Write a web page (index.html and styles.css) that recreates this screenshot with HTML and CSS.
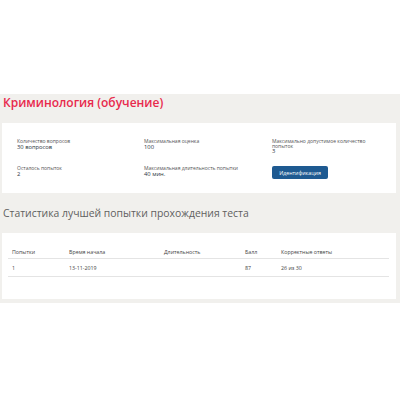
FILE: index.html
```html
<!DOCTYPE html>
<html lang="ru">
<head>
<meta charset="utf-8">
<link rel="stylesheet" href="styles.css">
</head>
<body>
<div class="top"></div>
<main class="page">
  <h1 class="title">Криминология (обучение)</h1>
  <section class="card info">
    <div class="item"><div class="label">Количество вопросов</div><div class="value">30 вопросов</div></div>
    <div class="item"><div class="label">Максимальная оценка</div><div class="value">100</div></div>
    <div class="item"><div class="label">Максимально допустимое количество<br>попыток</div><div class="value">3</div></div>
    <div class="item"><div class="label">Осталось попыток</div><div class="value">2</div></div>
    <div class="item"><div class="label">Максимальная длительность попытки</div><div class="value">40 мин.</div></div>
    <div class="item"><button class="btn">Идентификация</button></div>
  </section>
  <h2 class="subtitle">Статистика лучшей попытки прохождения теста</h2>
  <section class="card stats">
    <table class="table">
      <thead>
        <tr><th class="c1">Попытки</th><th class="c2">Время начала</th><th class="c3">Длительность</th><th class="c4">Балл</th><th class="c5">Корректные ответы</th></tr>
      </thead>
      <tbody>
        <tr><td>1</td><td>13-11-2019</td><td></td><td>87</td><td>26 из 30</td></tr>
      </tbody>
    </table>
  </section>
</main>
</body>
</html>
```
FILE: styles.css
```css
html, body {
  margin: 0;
  padding: 0;
  background: #ffffff;
  font-family: "Open Sans", "Liberation Sans", sans-serif;
}
.top {
  height: 94px;
}
.page {
  background: #f1f0ed;
  padding: 0 4px 4px 2px;
  height: 209px;
  box-sizing: border-box;
}
.title {
  margin: 0;
  padding: 1px 0 0 1px;
  height: 29px;
  box-sizing: border-box;
  font-size: 12px;
  line-height: 16px;
  font-weight: 600;
  color: #e8294c;
}
.card {
  background: #ffffff;
}
.info {
  height: 70px;
  box-sizing: border-box;
  padding: 16px 0 0 15px;
  display: grid;
  grid-template-columns: 127px 128px 120px;
  grid-template-rows: 27px 24px;
}
.label {
  font-size: 5px;
  line-height: 4.5px;
  color: #555;
}
.value {
  font-size: 5.8px;
  line-height: 6px;
  color: #2a3340;
}
.btn {
  display: block;
  margin: 0;
  width: 56px;
  height: 13px;
  padding: 0;
  border: none;
  border-radius: 2px;
  background: #1e5a91;
  color: #fff;
  font-family: inherit;
  font-size: 5.3px;
}
.subtitle {
  margin: 0;
  padding: 12px 0 0 1px;
  height: 40px;
  box-sizing: border-box;
  font-size: 10.4px;
  line-height: 16px;
  font-weight: 400;
  color: #5f5f5f;
}
.stats {
  height: 66px;
  box-sizing: border-box;
  padding: 12px 7px 0 6px;
}
.table {
  width: 100%;
  table-layout: fixed;
  border-collapse: collapse;
  font-size: 5.3px;
  color: #444;
}
.table th {
  font-weight: 400;
  text-align: left;
  height: 13px;
  padding: 0 0 0 4px;
  border-bottom: 1px solid #e4e4e4;
}
.table td {
  height: 17px;
  padding: 0 0 0 4px;
  border-bottom: 1px solid #e4e4e4;
}
.c1 { width: 53px; }
.c2 { width: 91px; }
.c3 { width: 77px; }
.c4 { width: 32px; }
```
